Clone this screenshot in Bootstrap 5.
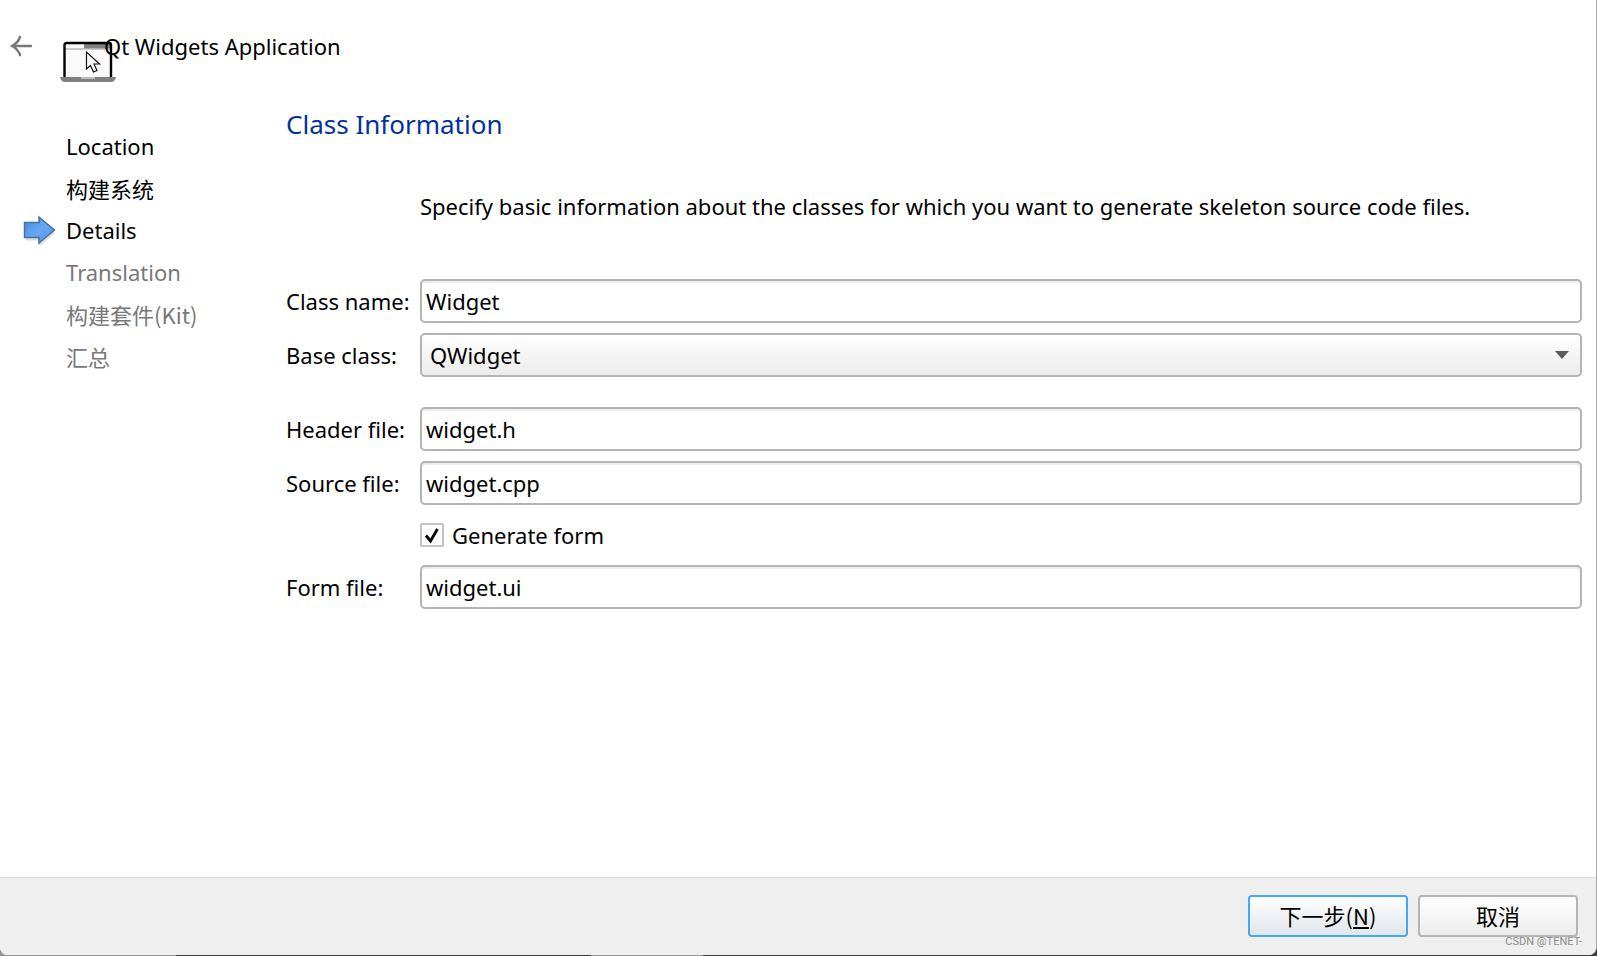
<!DOCTYPE html>
<html lang="zh-CN">
<head>
<meta charset="utf-8">
<meta name="viewport" content="width=device-width, initial-scale=1">
<title>Qt Widgets Application</title>
<link href="https://cdn.jsdelivr.net/npm/bootstrap@5.3.0/dist/css/bootstrap.min.css" rel="stylesheet">
<style>
  body {
    font-family: "Noto Sans", "Noto Sans CJK SC", sans-serif;
    font-size: 22px;
    line-height: 30px;
    color: #000;
    background: linear-gradient(90deg, #999 11%, #3c3c3c 11% 37%, #999 37% 44%, #3c3c3c 44%);
  }
  .wizard {
    min-height: calc(100vh - 1px);
    background: #fff;
    border-right: 1px solid #a8a8a8;
    margin-bottom: 1px;
    border-radius: 0 0 8px 8px;
  }
  .wizard-header { height: 96px; padding: 0 10px 4px; }
  .back-btn { width: 24px; height: 24px; line-height: 0; }
  .app-title { margin-left: 70px; }
  .laptop { left: 60px; top: 40px; }
  .steps { width: 286px; padding: 29px 0 0 23px; }
  .steps li { height: 42px; display: flex; align-items: center; }
  .steps li.pending { color: #787878; }
  .step-mark { width: 43px; flex: none; line-height: 0; }
  .cjk { font-family: "Noto Sans CJK SC", sans-serif; }
  .page-body { padding-right: 14px; }
  .page-title { font-size: 26px; line-height: 36px; color: #003399; margin: 10px 0 49px; }
  .intro { margin: 0 0 58px 134px; }
  .field-label { width: 134px; flex: none; }
  .field-row { margin-bottom: 10px; }
  .field-gap { margin-bottom: 30px; }
  .form-control, .form-select {
    height: 44px;
    border: 2px solid #b4b4b4;
    border-radius: 5px;
    color: #000;
    font-size: 22px;
    line-height: 30px;
    padding: 4px;
  }
  .form-control { box-shadow: inset 0 2px #ededed; }
  .form-select {
    padding: 4px 40px 4px 8px;
    background: url("data:image/svg+xml,%3Csvg xmlns='http://www.w3.org/2000/svg' viewBox='0 0 14 8'%3E%3Cpath d='M0 0h14L7 8z' fill='%235a5a5a'/%3E%3C/svg%3E") no-repeat right 11px center / 14px 8px,
      linear-gradient(#fff, #ebebeb);
  }
  .check-row { margin: 15px 0 15px 134px; }
  .form-check-input[type=checkbox] {
    width: 24px;
    height: 24px;
    flex: none;
    margin: 3px 0;
    border: 2px solid #c4c4c4;
    border-radius: 1px;
    background-color: #fff;
  }
  .form-check-input[type=checkbox]:checked {
    background-color: #fff;
    border-color: #c4c4c4;
    background-image: url("data:image/svg+xml,%3Csvg xmlns='http://www.w3.org/2000/svg' viewBox='0 0 20 20'%3E%3Cpath d='M4 10.500L8.500 16L15.500 4' fill='none' stroke='%23000' stroke-width='2.800'/%3E%3C/svg%3E");
    background-size: 100%;
  }
  .wizard-footer {
    background: #efefef;
    border-top: 1px solid #dcdcdc;
    border-radius: 0 0 8px 8px;
    padding: 17px 18px 18px;
    gap: 10px;
  }
  .dlg-btn {
    width: 160px;
    height: 42px;
    padding: 0 0 2px;
    font-size: 22px;
    line-height: 30px;
    color: #000;
    border: 2px solid #b4b4b4;
    border-radius: 4px;
    background: linear-gradient(#fff, #ececec);
  }
  .dlg-btn.default { border-color: #42a8f5; background: linear-gradient(#fdfefe, #e2e7ec); }
  .watermark {
    right: 14px;
    bottom: 4px;
    font: 11px/18px Roboto, sans-serif;
    color: #8c8c8c;
  }
</style>
</head>
<body>
<div class="wizard d-flex flex-column">
  <header class="wizard-header position-relative d-flex align-items-center">
    <button type="button" class="back-btn btn p-0 border-0" aria-label="Back">
      <svg width="24" height="24" viewBox="0 0 24 24" fill="none" stroke="#777" stroke-width="2.400" stroke-linecap="round"><path d="M2 12H21M10 3Q8 9 2 12Q8 15 10 21"/></svg>
    </button>
    <svg class="laptop position-absolute" width="56" height="42" viewBox="0 0 56 42" aria-hidden="true">
      <rect x="5" y="3.500" width="46" height="35" rx="2" fill="#fafafa"/>
      <path d="M24 4h26v4.500H24z" fill="#808080"/>
      <path d="M5 9h46" stroke="#999" stroke-width="1"/>
      <rect x="4.500" y="3" width="46.500" height="35.500" rx="2" fill="none" stroke="#000" stroke-width="2.400"/>
      <path d="M0 37h56q-1 5-5 5H5q-4 0-5-5z" fill="#808080"/>
      <path d="M21 37h14v2H21z" fill="#bbb"/>
      <path d="M26.500 12v17l4-3.500 3 6.500 3.500-1.500-3-6.500h5.500z" fill="#fff" stroke="#111" stroke-width="1.200"/>
    </svg>
    <div class="app-title position-relative">Qt Widgets Application</div>
  </header>

  <main class="d-flex flex-grow-1">
    <ol class="steps list-unstyled mb-0 flex-shrink-0">
      <li><span class="step-mark"></span>Location</li>
      <li class="cjk"><span class="step-mark"></span>构建系统</li>
      <li aria-current="step"><span class="step-mark">
        <svg width="34" height="30" viewBox="0 0 34 30" aria-hidden="true">
          <defs><linearGradient id="arrowFill" x1="0" x2="1" y1="0" y2="1"><stop offset="0" stop-color="#3d86e0"/><stop offset=".5" stop-color="#68a8f5"/><stop offset="1" stop-color="#4d8fe0"/></linearGradient></defs>
          <path d="M3 24h14v5l14-12" fill="none" stroke="#ddd" stroke-width="3"/>
          <path d="M1.500 7.500H16V2l15.500 13L16 28v-5.500H1.500z" fill="url(#arrowFill)" stroke="#48719f" stroke-width="1.500"/>
        </svg></span>Details</li>
      <li class="pending"><span class="step-mark"></span>Translation</li>
      <li class="pending cjk"><span class="step-mark"></span>构建套件(Kit)</li>
      <li class="pending cjk"><span class="step-mark"></span>汇总</li>
    </ol>

    <form class="page-body flex-grow-1" id="classForm">
      <h1 class="page-title fw-normal">Class Information</h1>
      <p class="intro">Specify basic information about the classes for which you want to generate skeleton source code files.</p>

      <div class="field-row d-flex align-items-center">
        <label class="field-label" for="className">Class name:</label>
        <input class="form-control" id="className" type="text" value="Widget">
      </div>
      <div class="field-gap d-flex align-items-center">
        <label class="field-label" for="baseClass">Base class:</label>
        <select class="form-select" id="baseClass"><option>QWidget</option></select>
      </div>
      <div class="field-row d-flex align-items-center">
        <label class="field-label" for="headerFile">Header file:</label>
        <input class="form-control" id="headerFile" type="text" value="widget.h">
      </div>
      <div class="field-row d-flex align-items-center">
        <label class="field-label" for="sourceFile">Source file:</label>
        <input class="form-control" id="sourceFile" type="text" value="widget.cpp">
      </div>
      <div class="check-row d-flex align-items-center gap-2">
        <input class="form-check-input" id="generateForm" type="checkbox" checked>
        <label for="generateForm">Generate form</label>
      </div>
      <div class="field-row d-flex align-items-center">
        <label class="field-label" for="formFile">Form file:</label>
        <input class="form-control" id="formFile" type="text" value="widget.ui">
      </div>
    </form>
  </main>

  <footer class="wizard-footer position-relative d-flex justify-content-end">
    <button type="submit" form="classForm" class="dlg-btn default btn cjk">下一步(<u>N</u>)</button>
    <button type="button" class="dlg-btn btn cjk">取消</button>
    <span class="watermark position-absolute">CSDN @TENET-</span>
  </footer>
</div>
<script src="https://cdn.jsdelivr.net/npm/bootstrap@5.3.0/dist/js/bootstrap.bundle.min.js"></script>
</body>
</html>
